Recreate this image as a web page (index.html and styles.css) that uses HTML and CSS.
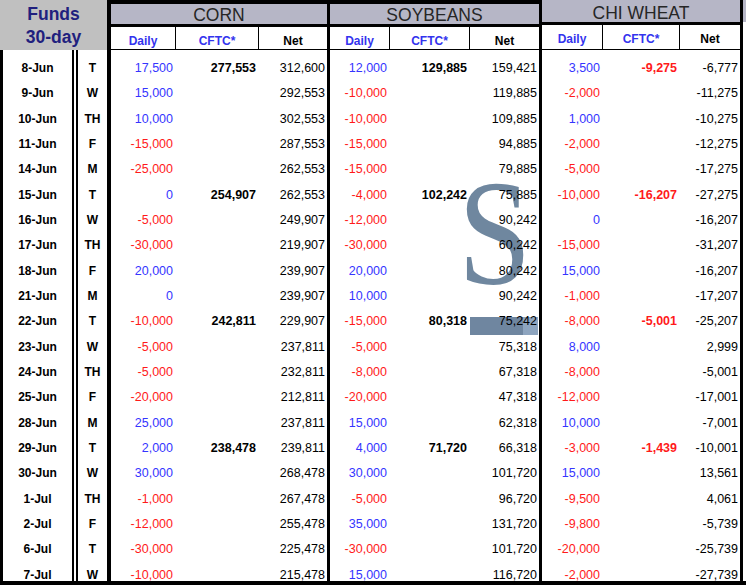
FILE: index.html
```html
<!DOCTYPE html>
<html>
<head>
<meta charset="utf-8">
<title>Funds 30-day</title>
<link rel="stylesheet" href="styles.css">
</head>
<body>
<div class="sheet">
  <div class="head">
    <div class="funds"><span>Funds</span><span>30-day</span></div>
    <div class="sec corn">
      <div class="title">CORN</div>
      <div class="subs"><div class="blue">Daily</div><div class="blue">CFTC*</div><div>Net</div></div>
    </div>
    <div class="sec soy">
      <div class="title">SOYBEANS</div>
      <div class="subs"><div class="blue">Daily</div><div class="blue">CFTC*</div><div>Net</div></div>
    </div>
    <div class="sec wheat">
      <div class="title">CHI WHEAT</div>
      <div class="subs"><div class="blue">Daily</div><div class="blue">CFTC*</div><div>Net</div></div>
    </div>
    <div class="sliver"></div>
  </div>

  <div class="watermark" aria-hidden="true">
    <div class="wm-s">S</div>
    <div class="wm-bar"></div>
  </div>

  <div class="body">
    <div class="d">8-Jun</div><div class="w">T</div><div class="n cd pos">17,500</div><div class="n cc b">277,553</div><div class="n cn">312,600</div><div class="n sd pos">12,000</div><div class="n sc b">129,885</div><div class="n sn">159,421</div><div class="n wd pos">3,500</div><div class="n wc b neg">-9,275</div><div class="n wn">-6,777</div>
    <div class="d">9-Jun</div><div class="w">W</div><div class="n cd pos">15,000</div><div class="n cc"></div><div class="n cn">292,553</div><div class="n sd neg">-10,000</div><div class="n sc"></div><div class="n sn">119,885</div><div class="n wd neg">-2,000</div><div class="n wc"></div><div class="n wn">-11,275</div>
    <div class="d">10-Jun</div><div class="w">TH</div><div class="n cd pos">10,000</div><div class="n cc"></div><div class="n cn">302,553</div><div class="n sd neg">-10,000</div><div class="n sc"></div><div class="n sn">109,885</div><div class="n wd pos">1,000</div><div class="n wc"></div><div class="n wn">-10,275</div>
    <div class="d">11-Jun</div><div class="w">F</div><div class="n cd neg">-15,000</div><div class="n cc"></div><div class="n cn">287,553</div><div class="n sd neg">-15,000</div><div class="n sc"></div><div class="n sn">94,885</div><div class="n wd neg">-2,000</div><div class="n wc"></div><div class="n wn">-12,275</div>
    <div class="d">14-Jun</div><div class="w">M</div><div class="n cd neg">-25,000</div><div class="n cc"></div><div class="n cn">262,553</div><div class="n sd neg">-15,000</div><div class="n sc"></div><div class="n sn">79,885</div><div class="n wd neg">-5,000</div><div class="n wc"></div><div class="n wn">-17,275</div>
    <div class="d">15-Jun</div><div class="w">T</div><div class="n cd pos">0</div><div class="n cc b">254,907</div><div class="n cn">262,553</div><div class="n sd neg">-4,000</div><div class="n sc b">102,242</div><div class="n sn">75,885</div><div class="n wd neg">-10,000</div><div class="n wc b neg">-16,207</div><div class="n wn">-27,275</div>
    <div class="d">16-Jun</div><div class="w">W</div><div class="n cd neg">-5,000</div><div class="n cc"></div><div class="n cn">249,907</div><div class="n sd neg">-12,000</div><div class="n sc"></div><div class="n sn">90,242</div><div class="n wd pos">0</div><div class="n wc"></div><div class="n wn">-16,207</div>
    <div class="d">17-Jun</div><div class="w">TH</div><div class="n cd neg">-30,000</div><div class="n cc"></div><div class="n cn">219,907</div><div class="n sd neg">-30,000</div><div class="n sc"></div><div class="n sn">60,242</div><div class="n wd neg">-15,000</div><div class="n wc"></div><div class="n wn">-31,207</div>
    <div class="d">18-Jun</div><div class="w">F</div><div class="n cd pos">20,000</div><div class="n cc"></div><div class="n cn">239,907</div><div class="n sd pos">20,000</div><div class="n sc"></div><div class="n sn">80,242</div><div class="n wd pos">15,000</div><div class="n wc"></div><div class="n wn">-16,207</div>
    <div class="d">21-Jun</div><div class="w">M</div><div class="n cd pos">0</div><div class="n cc"></div><div class="n cn">239,907</div><div class="n sd pos">10,000</div><div class="n sc"></div><div class="n sn">90,242</div><div class="n wd neg">-1,000</div><div class="n wc"></div><div class="n wn">-17,207</div>
    <div class="d">22-Jun</div><div class="w">T</div><div class="n cd neg">-10,000</div><div class="n cc b">242,811</div><div class="n cn">229,907</div><div class="n sd neg">-15,000</div><div class="n sc b">80,318</div><div class="n sn">75,242</div><div class="n wd neg">-8,000</div><div class="n wc b neg">-5,001</div><div class="n wn">-25,207</div>
    <div class="d">23-Jun</div><div class="w">W</div><div class="n cd neg">-5,000</div><div class="n cc"></div><div class="n cn">237,811</div><div class="n sd neg">-5,000</div><div class="n sc"></div><div class="n sn">75,318</div><div class="n wd pos">8,000</div><div class="n wc"></div><div class="n wn">2,999</div>
    <div class="d">24-Jun</div><div class="w">TH</div><div class="n cd neg">-5,000</div><div class="n cc"></div><div class="n cn">232,811</div><div class="n sd neg">-8,000</div><div class="n sc"></div><div class="n sn">67,318</div><div class="n wd neg">-8,000</div><div class="n wc"></div><div class="n wn">-5,001</div>
    <div class="d">25-Jun</div><div class="w">F</div><div class="n cd neg">-20,000</div><div class="n cc"></div><div class="n cn">212,811</div><div class="n sd neg">-20,000</div><div class="n sc"></div><div class="n sn">47,318</div><div class="n wd neg">-12,000</div><div class="n wc"></div><div class="n wn">-17,001</div>
    <div class="d">28-Jun</div><div class="w">M</div><div class="n cd pos">25,000</div><div class="n cc"></div><div class="n cn">237,811</div><div class="n sd pos">15,000</div><div class="n sc"></div><div class="n sn">62,318</div><div class="n wd pos">10,000</div><div class="n wc"></div><div class="n wn">-7,001</div>
    <div class="d">29-Jun</div><div class="w">T</div><div class="n cd pos">2,000</div><div class="n cc b">238,478</div><div class="n cn">239,811</div><div class="n sd pos">4,000</div><div class="n sc b">71,720</div><div class="n sn">66,318</div><div class="n wd neg">-3,000</div><div class="n wc b neg">-1,439</div><div class="n wn">-10,001</div>
    <div class="d">30-Jun</div><div class="w">W</div><div class="n cd pos">30,000</div><div class="n cc"></div><div class="n cn">268,478</div><div class="n sd pos">30,000</div><div class="n sc"></div><div class="n sn">101,720</div><div class="n wd pos">15,000</div><div class="n wc"></div><div class="n wn">13,561</div>
    <div class="d">1-Jul</div><div class="w">TH</div><div class="n cd neg">-1,000</div><div class="n cc"></div><div class="n cn">267,478</div><div class="n sd neg">-5,000</div><div class="n sc"></div><div class="n sn">96,720</div><div class="n wd neg">-9,500</div><div class="n wc"></div><div class="n wn">4,061</div>
    <div class="d">2-Jul</div><div class="w">F</div><div class="n cd neg">-12,000</div><div class="n cc"></div><div class="n cn">255,478</div><div class="n sd pos">35,000</div><div class="n sc"></div><div class="n sn">131,720</div><div class="n wd neg">-9,800</div><div class="n wc"></div><div class="n wn">-5,739</div>
    <div class="d">6-Jul</div><div class="w">T</div><div class="n cd neg">-30,000</div><div class="n cc"></div><div class="n cn">225,478</div><div class="n sd neg">-30,000</div><div class="n sc"></div><div class="n sn">101,720</div><div class="n wd neg">-20,000</div><div class="n wc"></div><div class="n wn">-25,739</div>
    <div class="d">7-Jul</div><div class="w">W</div><div class="n cd neg">-10,000</div><div class="n cc"></div><div class="n cn">215,478</div><div class="n sd pos">15,000</div><div class="n sc"></div><div class="n sn">116,720</div><div class="n wd neg">-2,000</div><div class="n wc"></div><div class="n wn">-27,739</div>
  </div>
  <div class="foot"></div>
</div>
</body>
</html>
```

FILE: styles.css
```css
* { box-sizing: border-box; }

body {
  margin: 0;
  background: #fff;
  font-family: "Liberation Sans", Arial, sans-serif;
  color: #000;
}

.sheet {
  position: relative;
  width: 746px;
  height: 588px;
  overflow: hidden;
  background: #fff;
}

/* ---------- header ---------- */
.head {
  display: flex;
  height: 50px;
}

.funds {
  width: 107px;
  background: #c0c0c0;
  color: #20207e;
  font-weight: bold;
  font-size: 17.5px;
  line-height: 23.7px;
  padding-top: 2.6px;
  text-align: center;
}
.funds span { display: block; }

.sec {
  display: flex;
  flex-direction: column;
  border-left: 4px solid #000;
}
.corn { width: 220px; }
.soy { width: 212px; border-left-width: 3px; }
.wheat { width: 204px; border-left-width: 3px; border-right: 3px solid #000; }

.title {
  height: 27px;
  background: #b6b6c6;
  border-top: 4px solid #000;
  border-bottom: 3px solid #000;
  text-align: center;
  font-size: 17.5px;
  line-height: 22px;
  color: #262626;
}
.wheat .title {
  border-top: 0;
  height: 25px;
  padding-top: 2px;
}

.subs {
  display: grid;
  height: 23px;
  border-bottom: 1px solid #000;
  font-size: 12px;
  font-weight: bold;
  text-align: center;
}
.corn .subs { grid-template-columns: 64px 83px 69px; }
.soy .subs { grid-template-columns: 59px 80px 70px; }
.wheat .subs { grid-template-columns: 60px 77px 61px; height: 25px; }
.subs div {
  line-height: 14px;
  padding-top: 7.3px;
}
.subs div + div { border-left: 1px solid #000; }
.subs .blue { color: #3333ee; }

.sliver {
  width: 3px;
  background: linear-gradient(#b6b6c6 0 22px, #fff 22px);
}

/* ---------- watermark ---------- */
.watermark {
  position: absolute;
  left: 0;
  top: 0;
  z-index: 0;
}
.wm-s {
  position: absolute;
  left: 458px;
  top: 158px;
  font-family: "Liberation Serif", "Times New Roman", serif;
  font-size: 150px;
  line-height: 1;
  color: #6f879f;
  transform: scaleX(0.88);
  transform-origin: left top;
}
.wm-bar {
  position: absolute;
  left: 470px;
  top: 317px;
  width: 68px;
  height: 18px;
  background: linear-gradient(to right, #6f86a0 78%, #8ea5bf 78%);
}

/* ---------- body ---------- */
.body {
  position: relative;
  z-index: 1;
  display: grid;
  grid-template-columns: 78px 29px 68px 83px 69px 62px 80px 70px 63px 77px 64px;
  grid-auto-rows: 25.35px;
  height: 531px;
  overflow: hidden;
}
.body div {
  padding-top: 10.9px;
  line-height: 15px;
  white-space: nowrap;
}

.d, .w {
  font-weight: bold;
  font-size: 12px;
  text-align: center;
  padding-top: 11px;
}
.d {
  border-left: 3px solid #000;
  border-right: 6px double #000;
}

.n {
  font-size: 12.5px;
  text-align: right;
  padding-right: 2px;
}
.cd { border-left: 4px solid #000; }
.sd, .wd { border-left: 3px solid #000; }
.wn { border-right: 3px solid #000; }

.b { font-weight: bold; }
.pos { color: #3535ff; }
.neg { color: #ff1a1a; }

.foot {
  height: 4px;
  background: #000;
}
```
